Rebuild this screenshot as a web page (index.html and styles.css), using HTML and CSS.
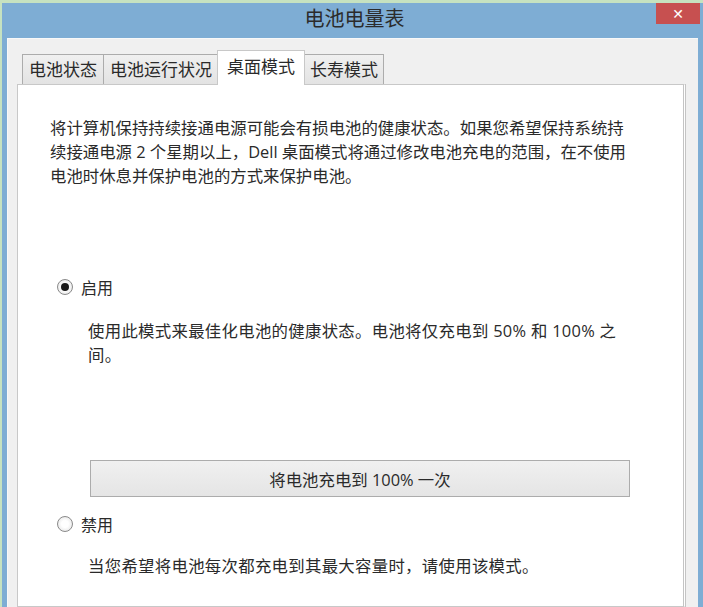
FILE: index.html
```html
<!DOCTYPE html>
<html lang="zh-CN">
<head>
<meta charset="utf-8">
<title>电池电量表</title>
<link rel="stylesheet" href="styles.css">
</head>
<body>
<div class="frame">
  <div class="titlebar">
    <span class="title">电池电量表</span>
    <span class="close">✕</span>
  </div>
  <div class="window">
    <div class="tabs">
      <div class="tab">电池状态</div>
      <div class="tab">电池运行状况</div>
      <div class="tab active">桌面模式</div>
      <div class="tab last">长寿模式</div>
    </div>
    <div class="panel">
      <p class="intro">将计算机保持持续接通电源可能会有损电池的健康状态。如果您希望保持系统持<br>续接通电源 2 个星期以上，Dell 桌面模式将通过修改电池充电的范围，在不使用<br>电池时休息并保护电池的方式来保护电池。</p>
      <div class="option first"><span class="radio checked"></span><span class="label">启用</span></div>
      <p class="desc first-desc">使用此模式来最佳化电池的健康状态。电池将仅充电到 50% 和 100% 之<br>间。</p>
      <div class="btn">将电池充电到 100% 一次</div>
      <div class="option second"><span class="radio"></span><span class="label">禁用</span></div>
      <p class="desc second-desc">当您希望将电池每次都充电到其最大容量时，请使用该模式。</p>
    </div>
  </div>
</div>
</body>
</html>
```

FILE: styles.css
```css
html, body {
  margin: 0;
  padding: 0;
  width: 703px;
  height: 607px;
  overflow: hidden;
  background: #c6e2c0;
}

body {
  font-family: "Open Sans", "Noto Sans CJK SC", sans-serif;
  color: #2a2a2a;
}

.frame {
  margin-top: 3px;
  margin-left: 2px;
  height: 604px;
  background: #7eadd4;
  padding: 0 5px 0 5px;
  display: flex;
  flex-direction: column;
}

.titlebar {
  position: relative;
  height: 35px;
  display: flex;
  align-items: center;
  justify-content: center;
}

.title {
  font-family: "Noto Sans CJK SC", sans-serif;
  font-size: 20px;
  color: #2b2b2b;
  margin-top: -7px;
  margin-left: 4px;
}

.close {
  position: absolute;
  top: 0;
  right: -2px;
  width: 44px;
  height: 21px;
  background: #c75050;
  color: #fff;
  font-size: 14px;
  font-weight: bold;
  display: flex;
  align-items: center;
  justify-content: center;
  font-family: "DejaVu Sans", sans-serif;
}

.window {
  flex: 1;
  background: #f0f0f0;
  border-top: 1px solid #f8f8f8;
  border-left: 1px solid #f8f8f8;
  display: flex;
  flex-direction: column;
}

.tabs {
  display: flex;
  align-items: flex-end;
  margin-top: 11px;
  padding-left: 14px;
  position: relative;
  z-index: 1;
}

.tab {
  height: 30px;
  box-sizing: border-box;
  border: 1px solid #acacac;
  border-bottom: none;
  background: linear-gradient(#f0f0f0, #e3e3e3);
  font-family: "Noto Sans CJK SC", sans-serif;
  font-size: 17px;
  line-height: 28px;
  padding: 0 6px;
  margin-right: -1px;
  color: #2a2a2a;
}

.tab.last {
  padding: 0 5px;
}

.tab.active {
  height: 35px;
  background: #fff;
  padding: 0 9px;
  line-height: 30px;
  margin-bottom: -1px;
  margin-left: -1px;
  margin-right: -1px;
  position: relative;
  z-index: 2;
  border-color: #c8c8c8;
}

.panel {
  flex: 1;
  margin-left: 9px;
  width: 669px;
  box-sizing: border-box;
  background: #fff;
  border: 1px solid #c8c8c8;
  border-right: 3px double #c4c4c4;
  padding: 31px 0 0 32px;
}

.intro {
  margin: 0;
  font-size: 16.4px;
  line-height: 24px;
}

.option {
  display: flex;
  align-items: center;
  height: 24px;
  margin-left: 7px;
  font-size: 16px;
}

.option.first {
  margin-top: 87px;
}

.option.second {
  margin-top: 15px;
}

.radio {
  width: 14px;
  height: 14px;
  border-radius: 50%;
  border: 1px solid #8a8a8a;
  background: radial-gradient(circle, #ffffff 35%, #dedede 100%);
  margin-right: 8px;
  display: flex;
  align-items: center;
  justify-content: center;
}

.radio.checked::after {
  content: "";
  width: 8px;
  height: 8px;
  border-radius: 50%;
  background: #1a1a1a;
}

.desc {
  margin: 0;
  padding-left: 38px;
  font-size: 16.4px;
  line-height: 24px;
  letter-spacing: 0.3px;
}

.first-desc {
  margin-top: 20px;
}

.second-desc {
  margin-top: 18px;
}

.btn {
  margin-top: 93px;
  margin-left: 40px;
  width: 540px;
  height: 37px;
  box-sizing: border-box;
  border: 1px solid #acacac;
  background: linear-gradient(#f0f0f0, #e5e5e5);
  display: flex;
  align-items: center;
  justify-content: center;
  font-size: 16.4px;
  color: #2a2a2a;
}
```
